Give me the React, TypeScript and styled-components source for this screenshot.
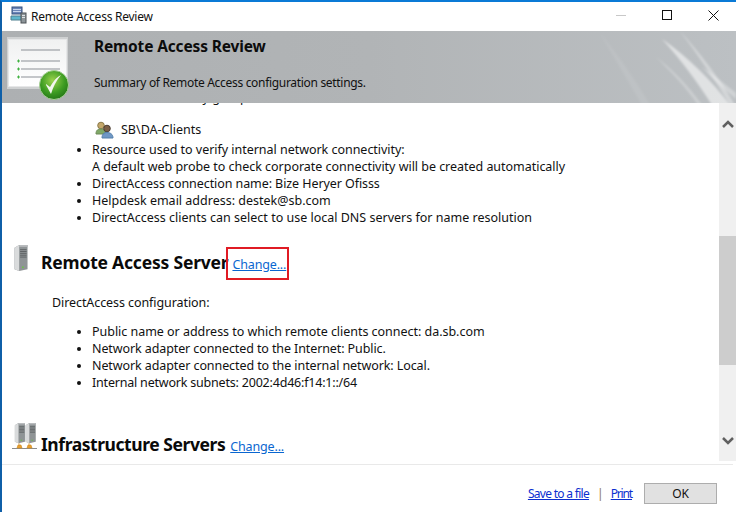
import React from "react";
import styled, { createGlobalStyle } from "styled-components";

const Global = createGlobalStyle`
  html, body { margin: 0; padding: 0; background: #fff; }
  body { font-family: "Noto Sans", "Open Sans", "Liberation Sans", sans-serif; font-size: 12.5px; color: #111; }
`;

const Windowed = styled.div`
  width: 736px; height: 512px; box-sizing: border-box; overflow: hidden;
  display: flex; flex-direction: column; background: #fff;
  border-top: 2px solid #0a7ad6; border-left: 2px solid #0f5fa8;
`;
const TitleBar = styled.div`
  height: 29px; flex: none; display: flex; align-items: center; padding-left: 8px;
`;
const TitleText = styled.span`
  margin: 0 0 0 4px; flex: 1; font-size: 12px; letter-spacing: -0.25px; color: #111;
`;
const WinButton = styled.div`
  width: 46px; height: 29px; margin-top: -3px; display: flex; align-items: center; justify-content: center;
`;
const Banner = styled.header`
  position: relative; height: 72px; flex: none; overflow: hidden;
  background: linear-gradient(90deg, #adb0b2 0%, #b1b4b6 50%, #bcc0c3 100%);
  display: flex;
`;
const Streaks = styled.svg`
  position: absolute; right: 0; top: 0;
`;
const BannerIcon = styled.div`
  width: 92px; flex: none; padding: 5px 0 0 4px; box-sizing: border-box;
`;
const BannerText = styled.div`
  position: relative; display: flex; flex-direction: column;
`;
const BannerTitle = styled.h1`
  margin: 5px 0 0; font-size: 15.5px; line-height: 21px; font-weight: 700; color: #0c0c0c; letter-spacing: -0.15px;
`;
const BannerSub = styled.p`
  margin: 17px 0 0; font-size: 12px; line-height: 17px; letter-spacing: -0.31px;
`;
const Middle = styled.div`
  flex: none; height: 358px; display: flex; overflow: hidden;
`;
const Content = styled.div`
  flex: 1; overflow: hidden;
`;
const Scrolled = styled.div`
  margin-top: -14px; line-height: 17px;
`;
const ClippedLine = styled.div`
  padding-left: 90px; height: 17px;
`;
const GroupRow = styled.div`
  display: flex; align-items: center; height: 21px; margin: 13px 0 1px; padding-left: 93px; gap: 7px;
`;
const List = styled.ul`
  margin: 0; padding: 0 0 0 90px; list-style: disc;
`;
const Item = styled.li<{ $spacing?: number }>`
  letter-spacing: ${(p) => p.$spacing ?? 0}px;
`;
const Section = styled.section<{ $top: number }>`
  margin-top: ${(p) => p.$top}px;
`;
const Heading = styled.div<{ $pad: number; $gap: number }>`
  display: flex; align-items: flex-end; height: 32px; padding-left: ${(p) => p.$pad}px; gap: ${(p) => p.$gap}px;
`;
const HeadingText = styled.h2<{ $spacing: number }>`
  margin: 0; font-size: 17.5px; line-height: 24px; font-weight: 700; color: #0a0a0a; letter-spacing: ${(p) => p.$spacing}px;
`;
const Annotated = styled.span`
  position: relative; display: inline-block;
  &::after {
    content: ""; position: absolute; left: -6px; top: -9px; width: 59px; height: 29px;
    border: 2px solid #e01b24;
  }
`;
const Link = styled.a<{ $spacing?: number; $size?: number; $color?: string }>`
  color: ${(p) => p.$color ?? "#0a66d0"}; text-decoration: underline; cursor: pointer;
  font-size: ${(p) => p.$size ?? 12.5}px; letter-spacing: ${(p) => p.$spacing ?? -0.15}px;
`;
const ChangeSlot = styled.span<{ $gap: number }>`
  margin-left: ${(p) => p.$gap}px; line-height: 17px; position: relative; top: -1px;
`;
const ConfigLabel = styled.p`
  margin: 20px 0 12px; padding-left: 50px; line-height: 17px; letter-spacing: -0.08px;
`;
const ScrollBar = styled.div`
  width: 17px; flex: none; background: #f0f0f0; display: flex; flex-direction: column; align-items: center;
`;
const Thumb = styled.div`
  width: 17px; height: 129px; background: #cdcdcd;
`;
const ArrowSlot = styled.div<{ $h: number }>`
  height: ${(p) => p.$h}px; flex: none; display: flex; align-items: center; justify-content: center; width: 100%;
`;
const Footer = styled.footer`
  flex: 1; display: flex; flex-direction: column;
`;
const Rule = styled.div`
  margin: 3px 3px 0 0; height: 1px; background: #e9e9e9;
`;
const Actions = styled.div`
  display: flex; align-items: center; justify-content: flex-end; padding: 18px 19px 0 0;
`;
const Separator = styled.span`
  margin: 0 7px 0 8px; color: #8a7a55; font-size: 12px;
`;
const OkButton = styled.button`
  width: 73px; height: 21px; margin-left: 12px; padding: 0; box-sizing: border-box;
  background: #e1e1e1; border: 1px solid #adadad; border-radius: 0;
  font: inherit; font-size: 12px; color: #111; letter-spacing: -0.2px;
`;

const AppIcon = () => (
  <svg width="17" height="18" viewBox="0 0 17 18" style={{ marginTop: -3 }}>
    <rect x="2" y="1" width="10" height="7" fill="#6c86b8" stroke="#34507f" />
    <path d="M3 3.500h8M3 5.500h8" stroke="#c9d6ee" />
    <path d="M1 10h12v4H1z" fill="#60b6cc" stroke="#4c7e8e" />
    <rect x="11" y="7" width="5" height="10" fill="#8d9599" stroke="#4c5256" />
    <path d="M12 9.500h3M12 11.500h3" stroke="#dfe3e5" />
  </svg>
);

const ReviewIcon = () => (
  <svg width="66" height="64" viewBox="0 0 66 64">
    <defs>
      <linearGradient id="page" x1="0" y1="0" x2="0" y2="1">
        <stop offset="0" stopColor="#f0f1f1" />
        <stop offset="1" stopColor="#ffffff" />
      </linearGradient>
      <radialGradient id="ball" cx="0.45" cy="0.35" r="0.75">
        <stop offset="0" stopColor="#9bd24d" />
        <stop offset="0.55" stopColor="#3d9c22" />
        <stop offset="1" stopColor="#1c6a14" />
      </radialGradient>
    </defs>
    <rect x="1" y="1" width="61" height="52" fill="#cfd1d2" />
    <rect x="2.500" y="3.500" width="58" height="47" fill="url(#page)" stroke="#e6e7e8" />
    <path d="M15 14h39M15 25h39M15 33h39M15 41h30" stroke="#8c8f96" strokeWidth="1.2" />
    <path d="M11 25h3M12.500 23.500v3M11 33h3M12.500 31.500v3M11 41h3M12.500 39.500v3" stroke="#3fb13f" />
    <circle cx="48" cy="49" r="14.500" fill="url(#ball)" stroke="#a8cf97" />
    <path d="M40 49l5 9c2-7 5-13 10-19-6 3-9 9-11 12l-4-3z" fill="#f3f6ee" />
  </svg>
);

const UsersIcon = () => (
  <svg width="19" height="18" viewBox="0 0 19 18">
    <circle cx="6" cy="4.500" r="3.300" fill="#c4a76a" stroke="#8b7a4a" />
    <path d="M1 13c0-4 2-5 5-5s5 1 5 5z" fill="#7fa867" stroke="#6e8a58" />
    <circle cx="12" cy="7.500" r="3.300" fill="#7c5f45" stroke="#4b3d33" />
    <path d="M7 17c0-4 2-5.500 5-5.500s6 1.500 6 5.500z" fill="#6f97c4" stroke="#5580ac" />
  </svg>
);

const ServerShape = ({ x }: { x: number }) => (
  <g transform={`translate(${x} 0)`}>
    <path d="M0 3l5-3h9v26l-9 2-5-2z" fill="#8f9496" />
    <path d="M0 3l5-3v28l-5-2z" fill="#d9dbdc" />
    <path d="M5 0h9v2H5z" fill="#b9bcbe" />
    <path d="M6 5h7M6 7h7M6 9h7M6 11h7M6 13h7" stroke="#5c6062" />
    <circle cx="9" cy="24" r="1" fill="#6cc04a" />
  </g>
);

const ServerIcon = () => (
  <svg width="15" height="26" viewBox="0 0 15 28" style={{ marginBottom: 3 }}><ServerShape x={0} /></svg>
);

const ServersIcon = () => (
  <svg width="25" height="27" viewBox="0 0 25 27" style={{ marginBottom: 6 }}>
    <g transform="scale(0.72)">
      <ServerShape x={4} />
      <ServerShape x={19} />
    </g>
    <path d="M0 25.500h25" stroke="#8c8c8c" />
    <path d="M7 20v2M6 22h3l1 3H5zM17 20v2M16 22h3l1 3h-5z" fill="#e8a030" stroke="#d08a20" strokeWidth="0.6" />
  </svg>
);

const Up = () => (
  <svg width="12" height="9" viewBox="0 0 12 9"><path d="M1 8l5-5 5 5" fill="none" stroke="#606060" strokeWidth="2.500" /></svg>
);
const Down = () => (
  <svg width="12" height="9" viewBox="0 0 12 9"><path d="M1 1l5 5 5-5" fill="none" stroke="#606060" strokeWidth="2.500" /></svg>
);

export default function App() {
  return (
    <>
      <Global />
      <Windowed>
        <TitleBar>
          <AppIcon />
          <TitleText>Remote Access Review</TitleText>
          <WinButton>
            <svg width="10" height="1"><path d="M0 .5h10" stroke="#c8c8c8" /></svg>
          </WinButton>
          <WinButton>
            <svg width="10" height="10"><rect x=".5" y=".5" width="9" height="9" fill="none" stroke="#111" /></svg>
          </WinButton>
          <WinButton>
            <svg width="11" height="11"><path d="M.5 .5l10 10M10.500 .5l-10 10" stroke="#111" /></svg>
          </WinButton>
        </TitleBar>
        <Banner>
          <Streaks width="220" height="72" viewBox="0 0 220 72">
            <defs>
              <filter id="soft"><feGaussianBlur stdDeviation="1.200" /></filter>
            </defs>
            <g filter="url(#soft)" fill="#fff">
              <path d="M146 8 C 172 26, 196 50, 214 74 L 196 74 C 182 52, 166 30, 146 8z" opacity="0.55" />
              <path d="M164 0 C 184 22, 204 48, 219 74 L 214 74 C 198 48, 182 24, 164 0z" opacity="0.35" />
              <path d="M140 26 C 156 38, 172 54, 186 74 L 182 74 C 170 56, 154 40, 140 26z" opacity="0.25" />
              <path d="M186 36 C 198 44, 210 54, 220 62 L 220 68 C 208 58, 196 48, 186 36z" opacity="0.3" />
              <path d="M84 2 C 102 24, 120 50, 134 74 L 126 74 C 112 50, 98 26, 84 2z" opacity="0.08" />
            </g>
          </Streaks>
          <BannerIcon><ReviewIcon /></BannerIcon>
          <BannerText>
            <BannerTitle>Remote Access Review</BannerTitle>
            <BannerSub>Summary of Remote Access configuration settings.</BannerSub>
          </BannerText>
        </Banner>
        <Middle>
          <Content>
            <Scrolled>
              <ClippedLine>Enabled for security groups:</ClippedLine>
              <GroupRow><UsersIcon />SB\DA-Clients</GroupRow>
              <List>
                <Item $spacing={-0.03}>Resource used to verify internal network connectivity:<br />A default web probe to check corporate connectivity will be created automatically</Item>
                <Item $spacing={-0.08}>DirectAccess connection name: Bize Heryer Ofisss</Item>
                <Item>Helpdesk email address: destek@sb.com</Item>
                <Item>DirectAccess clients can select to use local DNS servers for name resolution</Item>
              </List>
              <Section $top={16}>
                <Heading $pad={12} $gap={12}>
                  <ServerIcon />
                  <HeadingText $spacing={-0.2}>Remote Access Server</HeadingText>
                  <ChangeSlot $gap={-8}><Annotated><Link>Change...</Link></Annotated></ChangeSlot>
                </Heading>
                <ConfigLabel>DirectAccess configuration:</ConfigLabel>
                <List>
                  <Item $spacing={-0.03}>Public name or address to which remote clients connect: da.sb.com</Item>
                  <Item $spacing={-0.1}>Network adapter connected to the Internet: Public.</Item>
                  <Item $spacing={-0.09}>Network adapter connected to the internal network: Local.</Item>
                  <Item $spacing={-0.2}>Internal network subnets: 2002:4d46:f14:1::/64</Item>
                </List>
              </Section>
              <Section $top={33}>
                <Heading $pad={10} $gap={4}>
                  <ServersIcon />
                  <HeadingText $spacing={-0.44}>Infrastructure Servers</HeadingText>
                  <ChangeSlot $gap={1}><Link>Change...</Link></ChangeSlot>
                </Heading>
              </Section>
            </Scrolled>
          </Content>
          <ScrollBar>
            <ArrowSlot $h={40}><Up /></ArrowSlot>
            <ArrowSlot $h={93} />
            <Thumb />
            <ArrowSlot $h={56} />
            <ArrowSlot $h={40}><Down /></ArrowSlot>
          </ScrollBar>
        </Middle>
        <Footer>
          <Rule />
          <Actions>
            <Link $size={12} $spacing={-0.7} $color="#0b2fd0">Save to a file</Link>
            <Separator>|</Separator>
            <Link $size={12} $spacing={-1.15} $color="#0b2fd0">Print</Link>
            <OkButton>OK</OkButton>
          </Actions>
        </Footer>
      </Windowed>
    </>
  );
}
